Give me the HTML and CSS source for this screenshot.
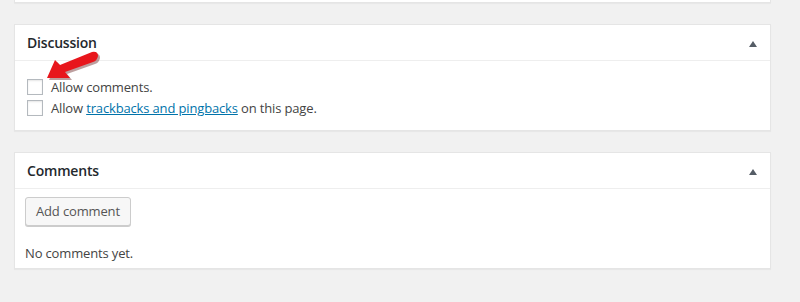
FILE: index.html
```html
<!DOCTYPE html>
<html lang="en">
<head>
    <meta charset="UTF-8">
    <title>Discussion and comments</title>
    <link rel="stylesheet" href="styles.css">
</head>
<body>
    <div class="wrap">
        <div class="postbox stub"></div>

        <div class="postbox discussion">
            <div class="postbox-header">
                <h2 class="hndle">Discussion</h2>
                <span class="toggle-indicator"></span>
            </div>
            <div class="inside">
                <label class="check-row"><input type="checkbox" name="comment_status"> Allow comments.</label>
                <label class="check-row"><input type="checkbox" name="ping_status"> Allow&nbsp;<a href="#">trackbacks and pingbacks</a>&nbsp;on this page.</label>
            </div>
            <!-- pointer drawn over the first checkbox -->
            <svg class="pointer" width="60" height="34" viewBox="44 50 60 34">
                <path d="M49,80 L57,62 L62,67 L94,54 Q100,53 100,58 Q99,63 95,64 L67,74 L72,80 Z" fill="#5a1010" opacity="0.4"/>
                <path d="M47,78 L55,60 L60,65 L92,52 Q98,51 98,56 Q97,61 93,62 L65,72 L70,78 Z" fill="#e8161c"/>
            </svg>
        </div>

        <div class="postbox comments">
            <div class="postbox-header">
                <h2 class="hndle">Comments</h2>
                <span class="toggle-indicator"></span>
            </div>
            <div class="inside">
                <button type="button" class="button">Add comment</button>
                <p class="no-comments">No comments yet.</p>
            </div>
        </div>
    </div>
</body>
</html>
```

FILE: styles.css
```css
body {
    margin: 0;
    background-color: #f1f1f1;
    font-family: "Open Sans", "Noto Sans", sans-serif;
    font-size: 13px;
    color: #444;
}
.wrap {
    width: 757px;
    margin-left: 14px;
}
.postbox {
    position: relative;
    background-color: #fff;
    border: 1px solid #e5e5e5;
    box-shadow: 0 1px 1px rgba(0, 0, 0, 0.04);
    margin-bottom: 21px;
}
.stub {
    height: 2px;
    border-top: none;
}
.discussion {
    height: 105px;
}
.comments {
    height: 115px;
}
.postbox-header {
    display: flex;
    align-items: center;
    justify-content: space-between;
    height: 35px;
    border-bottom: 1px solid #eee;
    padding: 0 13px 0 12px;
}
.hndle {
    margin: 0;
    font-size: 14px;
    font-weight: 600;
    color: #23282d;
    letter-spacing: -0.2px;
}
.toggle-indicator {
    width: 0;
    height: 0;
    margin-top: 3px;
    border-left: 4px solid transparent;
    border-right: 4px solid transparent;
    border-bottom: 6px solid #555d66;
}
.discussion .inside {
    padding: 15px 12px 0 12px;
}
.check-row {
    display: flex;
    align-items: center;
    height: 21px;
    letter-spacing: -0.15px;
}
.check-row input {
    appearance: none;
    width: 16px;
    height: 16px;
    margin: 0 8px 0 0;
    border: 1px solid #b4b9be;
    border-radius: 0;
    background-color: #fff;
    box-shadow: inset 0 1px 2px rgba(0, 0, 0, 0.1);
}
.check-row a {
    color: #0073aa;
    text-decoration: underline;
}
.comments .inside {
    padding: 8px 10px 0 10px;
}
.button {
    height: 29px;
    padding: 0 10px 1px;
    font-family: inherit;
    font-size: 13px;
    color: #555;
    background-color: #f7f7f7;
    border: 1px solid #ccc;
    border-radius: 3px;
    box-shadow: 0 1px 0 #ccc;
    letter-spacing: -0.15px;
    cursor: pointer;
}
.no-comments {
    margin: 17px 0 0 0;
    line-height: 20px;
    letter-spacing: -0.15px;
}
.pointer {
    position: absolute;
    left: 29px;
    top: 25px;
}
```
